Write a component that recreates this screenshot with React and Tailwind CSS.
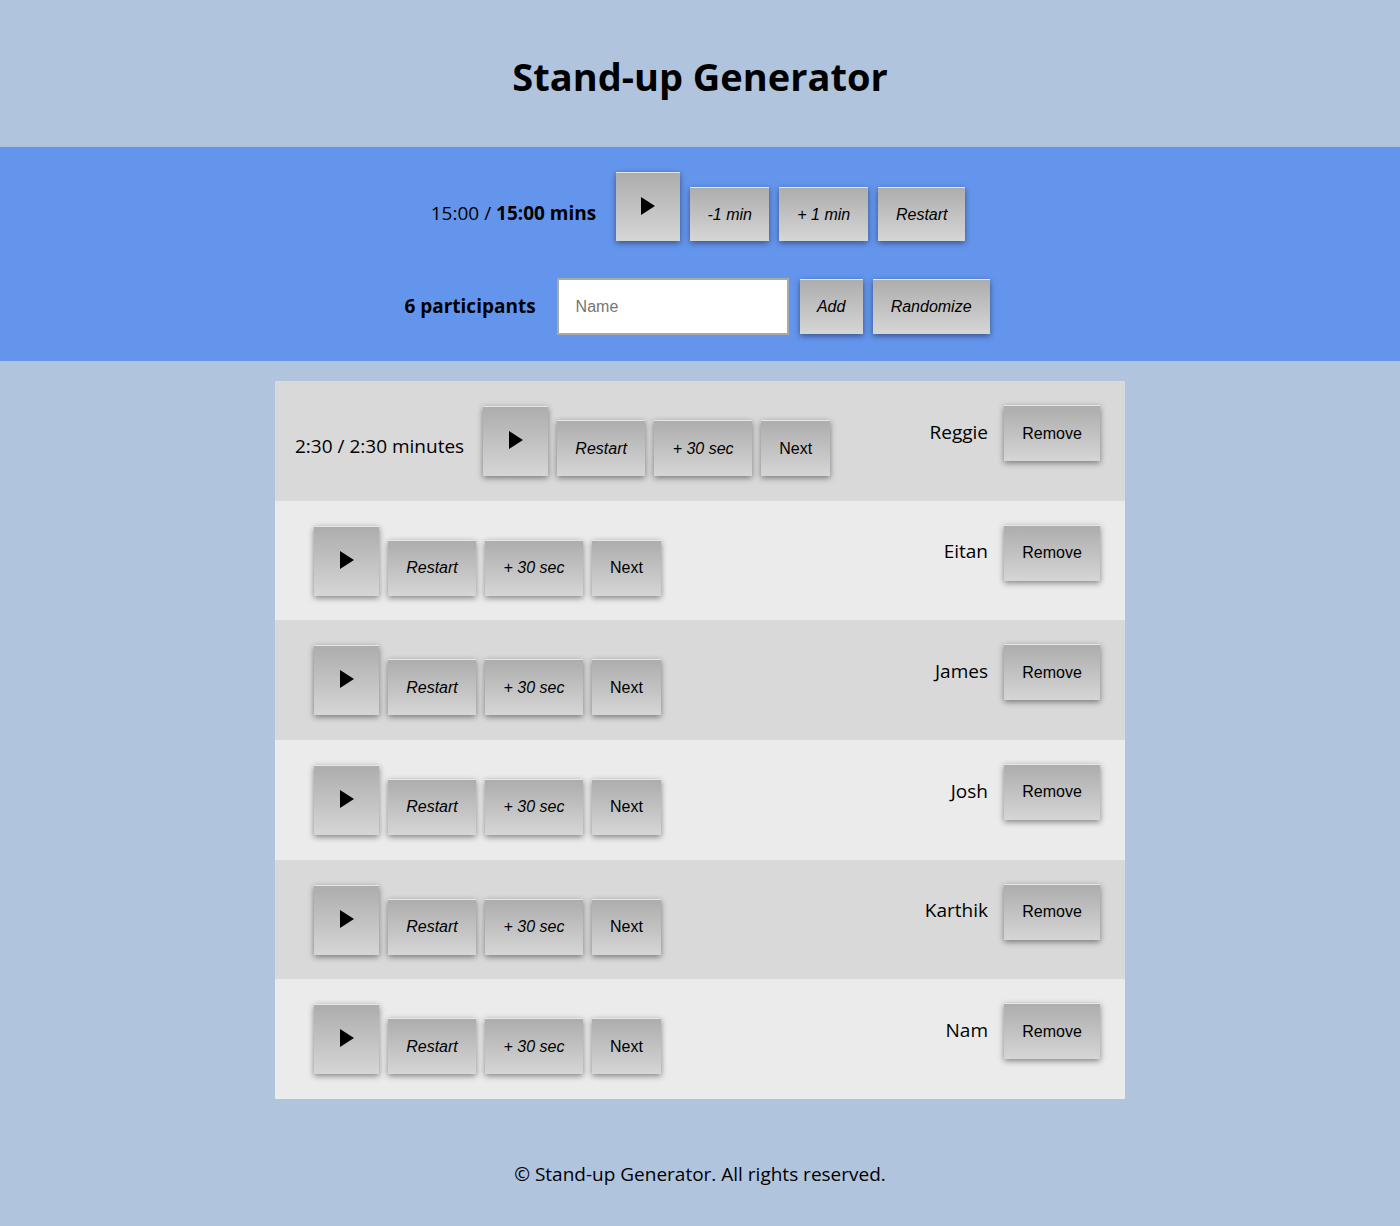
import React from "react";

const btn =
  "bg-gradient-to-b from-[#adadad] to-[#d6d6d6] border-t border-t-[#e6e6e6] shadow-[0_2px_6px_rgba(0,0,0,0.45)] text-black text-[16px] [font-family:'Liberation_Sans',Arial,sans-serif] flex items-center justify-center";

function Play({ w = "w-[64px]", h = "h-[69px]" }) {
  return (
    <div className={`${btn} ${w} ${h} !items-start pt-[24px]`}>
      <svg width="14" height="18" viewBox="0 0 14 18">
        <polygon points="0,0 14,9 0,18" fill="#000" />
      </svg>
    </div>
  );
}

const people = ["Reggie", "Eitan", "James", "Josh", "Karthik", "Nam"];

export default function App() {
  return (
    <div className="min-h-[1226px] bg-[#b0c4de] [font-family:'Open_Sans','Noto_Sans',sans-serif] text-black flex flex-col">
      <div className="h-[147px] flex items-center justify-center">
        <h1 className="text-[38px] font-bold pt-[6px]">Stand-up Generator</h1>
      </div>
      <div className="bg-[#6495ed] h-[214px] pt-[25px] flex flex-col items-center">
        <div className="flex items-end gap-[10px] pr-[4px]">
          <div className="text-[19px] mb-[14px] mr-[10px]">
            15:00 / <span className="font-bold">15:00 mins</span>
          </div>
          <Play />
          <div className={`${btn} italic w-[79px] h-[54px]`}>-1 min</div>
          <div className={`${btn} italic w-[89px] h-[54px]`}>+ 1 min</div>
          <div className={`${btn} italic w-[87px] h-[54px]`}>Restart</div>
        </div>
        <div className="flex items-center mt-[37px] pr-[6px]">
          <div className="text-[19px] font-bold mr-[21px]">6 participants</div>
          <div className="w-[232px] h-[57px] bg-white border-2 border-[#a9a9a9] flex items-center pl-[17px] text-[16px] text-[#757575] [font-family:'Liberation_Sans',Arial,sans-serif]">
            Name
          </div>
          <div className={`${btn} italic w-[63px] h-[55px] ml-[11px]`}>Add</div>
          <div className={`${btn} italic w-[117px] h-[55px] ml-[10px]`}>Randomize</div>
        </div>
      </div>
      <div className="w-[850px] mx-auto mt-[20px] flex flex-col">
        {people.map((name, i) => (
          <div
            key={name}
            className={`${i % 2 === 0 ? "bg-[#d9d9d9]" : "bg-[#ebebeb]"} h-[119.67px] flex justify-between pt-[25px] pr-[25px] ${i === 0 ? "pl-[20px]" : "pl-[39px]"}`}
          >
            <div className="flex items-end gap-[9px] h-[70px]">
              {i === 0 && (
                <div className="text-[19px] mb-[16px] mr-[10px]">2:30 / 2:30 minutes</div>
              )}
              <Play w="w-[65px]" h="h-[70px]" />
              <div className={`${btn} italic w-[88px] h-[56px]`}>Restart</div>
              <div className={`${btn} italic w-[98px] h-[56px]`}>+ 30 sec</div>
              <div className={`${btn} w-[69px] h-[56px]`}>Next</div>
            </div>
            <div className="flex items-center gap-[16px] h-[56px] -mt-[1px]">
              <div className="text-[19px] -mt-[2px]">{name}</div>
              <div className={`${btn} w-[96px] h-[56px]`}>Remove</div>
            </div>
          </div>
        ))}
      </div>
      <div className="text-center text-[19px] mt-[61px]">
        © Stand-up Generator. All rights reserved.
      </div>
    </div>
  );
}
